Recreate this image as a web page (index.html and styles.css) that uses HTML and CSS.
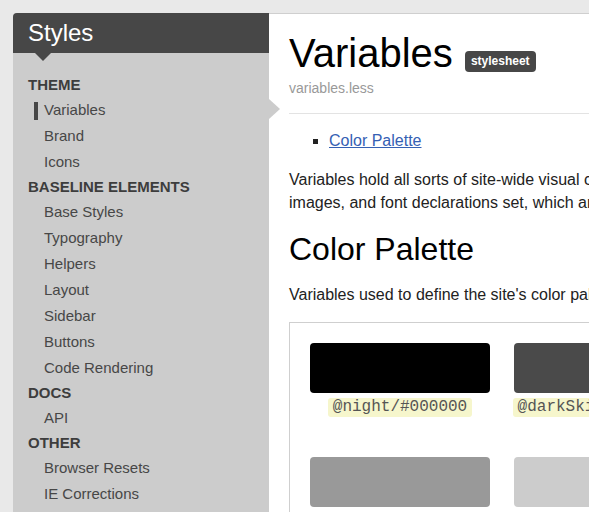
FILE: index.html
```html
<!DOCTYPE html>
<html lang="en">
<head>
<meta charset="utf-8">
<title>Styles – Variables</title>
<link rel="stylesheet" href="styles.css">
</head>
<body>
<div class="page">
  <aside class="sidebar">
    <div class="sidebar-header">Styles</div>
    <nav class="nav">
      <div class="nav-heading">THEME</div>
      <a class="nav-item active" href="#">Variables</a>
      <a class="nav-item" href="#">Brand</a>
      <a class="nav-item" href="#">Icons</a>
      <div class="nav-heading">BASELINE ELEMENTS</div>
      <a class="nav-item" href="#">Base Styles</a>
      <a class="nav-item" href="#">Typography</a>
      <a class="nav-item" href="#">Helpers</a>
      <a class="nav-item" href="#">Layout</a>
      <a class="nav-item" href="#">Sidebar</a>
      <a class="nav-item" href="#">Buttons</a>
      <a class="nav-item" href="#">Code Rendering</a>
      <div class="nav-heading">DOCS</div>
      <a class="nav-item" href="#">API</a>
      <div class="nav-heading">OTHER</div>
      <a class="nav-item" href="#">Browser Resets</a>
      <a class="nav-item" href="#">IE Corrections</a>
    </nav>
  </aside>
  <main class="main">
    <h1 class="title">Variables <span class="badge">stylesheet</span></h1>
    <div class="subtitle">variables.less</div>
    <hr class="rule">
    <ul class="toc">
      <li><a href="#color-palette">Color Palette</a></li>
    </ul>
    <p class="text">Variables hold all sorts of site-wide visual constants, such as colors, background images, and font declarations set, which are then used everywhere.</p>
    <h2 class="section-title" id="color-palette">Color Palette</h2>
    <p class="text">Variables used to define the site's color palette.</p>
    <div class="palette">
      <div class="swatch">
        <div class="chip chip-night"></div>
        <code class="chip-label">@night/#000000</code>
      </div>
      <div class="swatch">
        <div class="chip chip-darksky"></div>
        <code class="chip-label">@darkSkies/#4a4a4a</code>
      </div>
      <div class="swatch">
        <div class="chip chip-grey"></div>
        <code class="chip-label">@grey/#999999</code>
      </div>
      <div class="swatch">
        <div class="chip chip-light"></div>
        <code class="chip-label">@light/#cccccc</code>
      </div>
    </div>
  </main>
</div>
</body>
</html>
```

FILE: styles.css
```css
html, body {
  margin: 0;
  padding: 0;
  overflow: hidden;
}

body {
  background: #e9e9e9;
  font-family: "Liberation Sans", Arial, sans-serif;
  color: #222;
}

.page {
  display: flex;
  align-items: stretch;
  width: 1000px;
  min-height: 100vh;
  padding: 13px 0 0 13px;
  box-sizing: border-box;
}

.sidebar {
  position: relative;
  z-index: 1;
  flex: 0 0 256px;
  background: #cccccc;
  border-top-left-radius: 4px;
}

.sidebar-header {
  position: relative;
  display: flex;
  align-items: center;
  height: 40px;
  padding-left: 15px;
  background: #474747;
  color: #fff;
  font-size: 24px;
  border-top-left-radius: 4px;
}

.sidebar-header::after {
  content: "";
  position: absolute;
  left: 22px;
  top: 40px;
  border-left: 8px solid transparent;
  border-right: 8px solid transparent;
  border-top: 8px solid #474747;
}

.nav {
  display: flex;
  flex-direction: column;
  padding-top: 20px;
}

.nav-heading {
  padding-left: 15px;
  line-height: 24px;
  font-size: 15px;
  font-weight: bold;
  color: #3d3d3d;
}

.nav-item {
  position: relative;
  padding-left: 31px;
  line-height: 26px;
  font-size: 15px;
  color: #474747;
  text-decoration: none;
}

.nav-item.active::before {
  content: "";
  position: absolute;
  left: 21px;
  top: 5px;
  width: 4px;
  height: 18px;
  background: #474747;
}

.nav-item.active::after {
  content: "";
  position: absolute;
  right: -11px;
  top: 2px;
  border-top: 10px solid transparent;
  border-bottom: 10px solid transparent;
  border-left: 11px solid #cccccc;
}

.main {
  flex: 0 0 600px;
  background: #fff;
  border-top: 1px solid #cfcfcf;
  padding: 0 20px;
}

.title {
  margin: 17px 0 0;
  font-size: 40px;
  line-height: 44px;
  font-weight: normal;
  color: #000;
}

.badge {
  display: inline-block;
  vertical-align: 2px;
  margin-left: 1px;
  padding: 3px 6px;
  font-size: 12px;
  line-height: 15px;
  font-weight: bold;
  color: #fff;
  background: #474747;
  border-radius: 4px;
}

.subtitle {
  margin-top: 3px;
  font-size: 14px;
  line-height: 20px;
  color: #999;
}

.rule {
  margin: 15px 0 0;
  border: 0;
  border-top: 1px solid #e3e3e3;
}

.toc {
  margin: 16px 0 0;
  padding-left: 40px;
  list-style: square;
  font-size: 16px;
  line-height: 22px;
}

.toc a {
  color: #3560b3;
}

.text {
  margin: 16px 0 0;
  font-size: 16px;
  line-height: 23px;
  color: #222;
}

.section-title {
  margin: 17px 0 0;
  font-size: 32px;
  line-height: 36px;
  font-weight: normal;
  color: #000;
}

.palette {
  display: flex;
  flex-wrap: wrap;
  column-gap: 24px;
  row-gap: 40px;
  margin-top: 16px;
  padding: 20px;
  border: 1px solid #cfcfcf;
}

.swatch {
  display: flex;
  flex-direction: column;
  align-items: center;
  width: 180px;
}

.chip {
  width: 180px;
  height: 50px;
  border-radius: 4px;
}

.chip-night { background: #000000; }
.chip-darksky { background: #4a4a4a; }
.chip-grey { background: #999999; }
.chip-light { background: #cccccc; }

.chip-label {
  margin-top: 5px;
  padding: 0 5px;
  font-family: "Courier New", "Liberation Mono", monospace;
  font-size: 16px;
  line-height: 19px;
  color: #555;
  background: #f6f6cc;
  border-radius: 3px;
  white-space: nowrap;
}
```
